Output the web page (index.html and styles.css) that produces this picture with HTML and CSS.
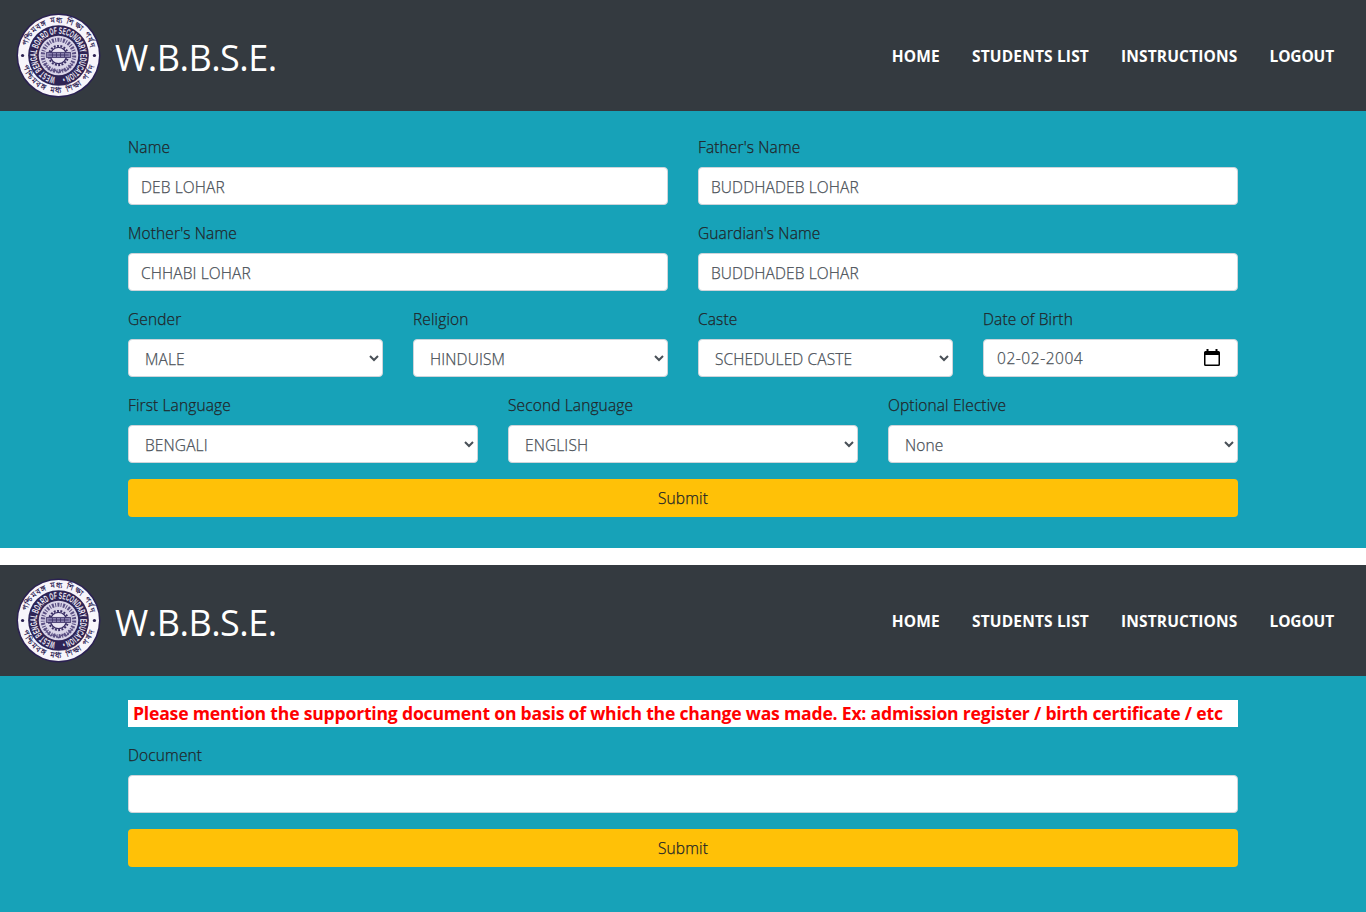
FILE: index.html
```html
<!DOCTYPE html>
<html lang="en">
<head>
<meta charset="utf-8">
<title>W.B.B.S.E.</title>
<link rel="stylesheet" href="styles.css">
</head>
<body>
<svg class="defs" width="0" height="0" aria-hidden="true">
  <symbol id="seal" viewBox="0 0 84 84">
    <circle cx="42" cy="42" r="41.5" fill="#2b2152"/>
    <circle cx="42" cy="42" r="40" fill="#f7f5fb"/>
    <circle cx="42" cy="42" r="30" fill="#2e2455"/>
    <circle cx="42" cy="42" r="19.5" fill="#d9d4e8"/>
    <path id="arc-top" d="M9.500 42a32.500 32.500 0 0 1 65 0" fill="none"/>
    <path id="arc-bottom" d="M5 42a37 37 0 0 0 74 0" fill="none"/>
    <path id="arc-mid" d="M42 63.500a21.500 21.500 0 1 1 .1 0" fill="none"/>
    <text class="seal-outer"><textPath href="#arc-top" startOffset="9" textLength="85">পশ্চিমবঙ্গ মধ্য শিক্ষা পর্ষদ</textPath></text>
    <text class="seal-outer"><textPath href="#arc-bottom" startOffset="11" textLength="94">পশ্চিমবঙ্গ মধ্য শিক্ষা পর্ষদ</textPath></text>
    <text class="seal-mid"><textPath href="#arc-mid" startOffset="3" textLength="128" lengthAdjust="spacingAndGlyphs">WEST BENGAL BOARD OF SECONDARY EDUCATION •</textPath></text>
    <circle cx="6.500" cy="42" r="1.600" fill="#2b2152"/>
    <circle cx="77.500" cy="42" r="1.600" fill="#2b2152"/>
    <circle cx="42" cy="42" r="15.500" fill="none" stroke="#5b5084" stroke-width="4" stroke-dasharray="2 1.200 1 1.300"/>
    <circle cx="42" cy="42" r="9.500" fill="#e8e4f2" stroke="#3a2f66" stroke-width="2" stroke-dasharray="1.900 1.410"/>
    <circle cx="42" cy="42" r="8" fill="#e8e4f2" stroke="#3a2f66" stroke-width="1.300"/>
    <path d="M30 39h24v5H30z" fill="#8b82af" stroke="#3a2f66" stroke-width=".8"/>
    <path d="M32 41.500h20M36 39.500v4m4-4v4m4-4v4m4-4v4" stroke="#3a2f66" stroke-width=".8"/>
    <path d="M28 50l6 7 4-1 4 3 4-3 4 1 6-7" fill="none" stroke="#5b5084" stroke-width="1.200"/>
  </symbol>
</svg>

<section class="screen">
  <header class="navbar">
    <a class="brand"><svg class="seal"><use href="#seal"/></svg><span class="brand-name">W.B.B.S.E.</span></a>
    <nav class="links"><a class="home">HOME</a><a class="students">STUDENTS LIST</a><a class="instructions">INSTRUCTIONS</a><a class="logout">LOGOUT</a></nav>
  </header>
  <form class="form">
    <div class="row halves">
      <div class="field"><label>Name</label><input class="control" value="DEB LOHAR"></div>
      <div class="field"><label>Father's Name</label><input class="control" value="BUDDHADEB LOHAR"></div>
    </div>
    <div class="row halves">
      <div class="field"><label>Mother's Name</label><input class="control" value="CHHABI LOHAR"></div>
      <div class="field"><label>Guardian's Name</label><input class="control" value="BUDDHADEB LOHAR"></div>
    </div>
    <div class="row quarters">
      <div class="field"><label>Gender</label><select class="control"><option>MALE</option></select></div>
      <div class="field"><label>Religion</label><select class="control"><option>HINDUISM</option></select></div>
      <div class="field"><label>Caste</label><select class="control"><option>SCHEDULED CASTE</option></select></div>
      <div class="field"><label>Date of Birth</label>
        <div class="control date"><span>02-02-2004</span><svg class="calendar" viewBox="0 0 16 18"><path fill="#000" fill-rule="evenodd" d="M2.500 0h2v2h7V0h2v2h1Q16 2 16 3.500v12Q16 17 14.500 17h-13Q0 17 0 15.500v-12Q0 2 1.500 2h1zM1.500 6v9.500h13V6z"/></svg></div>
      </div>
    </div>
    <div class="row thirds">
      <div class="field"><label>First Language</label><select class="control"><option>BENGALI</option></select></div>
      <div class="field"><label>Second Language</label><select class="control"><option>ENGLISH</option></select></div>
      <div class="field"><label>Optional Elective</label><select class="control"><option>None</option></select></div>
    </div>
    <button class="submit" type="button">Submit</button>
  </form>
</section>

<section class="screen screen-document">
  <header class="navbar">
    <a class="brand"><svg class="seal"><use href="#seal"/></svg><span class="brand-name">W.B.B.S.E.</span></a>
    <nav class="links"><a class="home">HOME</a><a class="students">STUDENTS LIST</a><a class="instructions">INSTRUCTIONS</a><a class="logout">LOGOUT</a></nav>
  </header>
  <form class="form">
    <p class="notice">Please mention the supporting document on basis of which the change was made. Ex: admission register / birth certificate / etc</p>
    <div class="field"><label>Document</label><input class="control"></div>
    <button class="submit" type="button">Submit</button>
  </form>
</section>
</body>
</html>
```
FILE: styles.css
```css
* { box-sizing: border-box; }
body {
  margin: 0;
  height: 912px;
  display: flex;
  flex-direction: column;
  gap: 17px;
  background: #fff;
  color: #212529;
  font: 300 15.500px/24px "Open Sans", "Noto Sans", sans-serif;
}
.defs { position: absolute; }
.screen { background: #17a2b8; height: 548px; flex: none; }
.screen-document { height: 347px; }
.navbar {
  height: 111px;
  padding: 0 32px 0 16px;
  display: flex;
  align-items: center;
  justify-content: space-between;
  background: #343a40;
  color: #fff;
}
.brand { display: flex; align-items: center; gap: 14px; }
.seal { width: 85px; height: 85px; }
.seal-outer { font: 700 7.500px "Noto Sans", sans-serif; fill: #2b2152; }
.seal-mid { font: 700 9.500px "Liberation Sans", sans-serif; fill: #f0edf7; }
.brand-name { font-size: 36px; line-height: 50px; padding-top: 4px; font-weight: 400; letter-spacing: -.5px; }
.links { display: flex; gap: 32px; font-weight: 700; font-size: 15.500px; }
.home { letter-spacing: .2px; }
.students, .instructions { letter-spacing: .16px; }
.logout { letter-spacing: -.15px; }
.form {
  width: 1110px;
  margin: 0 auto;
  padding-top: 24px;
  display: flex;
  flex-direction: column;
  gap: 16px;
}
.row { display: grid; column-gap: 30px; }
.halves { grid-template-columns: repeat(2, 1fr); }
.thirds { grid-template-columns: repeat(3, 1fr); }
.quarters { grid-template-columns: repeat(4, 1fr); }
.field { display: flex; flex-direction: column; gap: 8px; min-width: 0; }
label { letter-spacing: .13px; }
label, .control, .submit { -webkit-text-stroke: .25px currentColor; }
.control {
  width: 100%;
  height: 38px;
  padding: 7px 12px 5px;
  border: 1px solid #ced4da;
  border-radius: 4px;
  background: #fff;
  color: #495057;
  font: inherit;
  letter-spacing: .12px;
}
.date { display: flex; align-items: center; justify-content: space-between; padding: 6px 17px 6px 13px; }
.date span { letter-spacing: .55px; }
.calendar { width: 16px; height: 18px; }
.submit {
  height: 38px;
  border: 0;
  border-radius: 4px;
  background: #ffc107;
  color: #212529;
  font: inherit;
  letter-spacing: .15px;
}
.notice {
  margin: 0;
  height: 27px;
  padding: 0 5px;
  background: #fff;
  color: #f00;
  font-size: 17.600px;
  line-height: 27px;
  font-weight: 700;
  letter-spacing: -.205px;
  white-space: nowrap;
}
```
